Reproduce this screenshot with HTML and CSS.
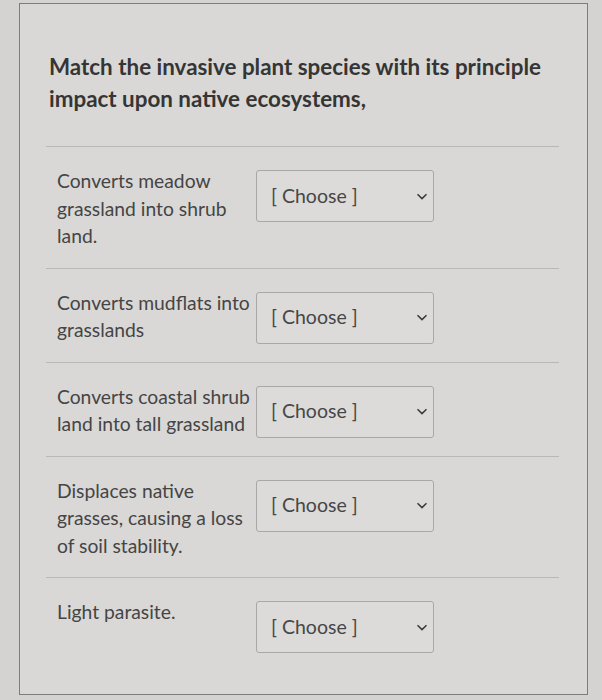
FILE: index.html
```html
<!DOCTYPE html>
<html lang="en">
<head>
<meta charset="utf-8">
<title>Matching question</title>
<link rel="stylesheet" href="styles.css">
</head>
<body>
<div class="card">
  <div class="question">Match the invasive plant species with its principle impact upon native ecosystems,</div>
  <div class="answers">
    <div class="row">
      <div class="prompt">Converts meadow grassland into shrub land.</div>
      <div class="select"><span class="value">[ Choose ]</span><svg class="chev" viewBox="0 0 12 7" width="12" height="7"><path d="M1.5 1.2 L6 5.6 L10.5 1.2" fill="none" stroke="#3a3a3a" stroke-width="1.5"/></svg></div>
    </div>
    <div class="row">
      <div class="prompt">Converts mudflats into grasslands</div>
      <div class="select"><span class="value">[ Choose ]</span><svg class="chev" viewBox="0 0 12 7" width="12" height="7"><path d="M1.5 1.2 L6 5.6 L10.5 1.2" fill="none" stroke="#3a3a3a" stroke-width="1.5"/></svg></div>
    </div>
    <div class="row">
      <div class="prompt">Converts coastal shrub land into tall grassland</div>
      <div class="select"><span class="value">[ Choose ]</span><svg class="chev" viewBox="0 0 12 7" width="12" height="7"><path d="M1.5 1.2 L6 5.6 L10.5 1.2" fill="none" stroke="#3a3a3a" stroke-width="1.5"/></svg></div>
    </div>
    <div class="row">
      <div class="prompt">Displaces native grasses, causing a loss of soil stability.</div>
      <div class="select"><span class="value">[ Choose ]</span><svg class="chev" viewBox="0 0 12 7" width="12" height="7"><path d="M1.5 1.2 L6 5.6 L10.5 1.2" fill="none" stroke="#3a3a3a" stroke-width="1.5"/></svg></div>
    </div>
    <div class="row last">
      <div class="prompt">Light parasite.</div>
      <div class="select"><span class="value">[ Choose ]</span><svg class="chev" viewBox="0 0 12 7" width="12" height="7"><path d="M1.5 1.2 L6 5.6 L10.5 1.2" fill="none" stroke="#3a3a3a" stroke-width="1.5"/></svg></div>
    </div>
  </div>
</div>
</body>
</html>
```
FILE: styles.css
```css
html, body {
  margin: 0;
  padding: 0;
}
body {
  background: #d4d3d1;
  font-family: Lato, "Open Sans", sans-serif;
  color: #454545;
  width: 602px;
  height: 700px;
  overflow: hidden;
}
.card {
  margin: 3px 0 0 19px;
  width: 569px;
  height: 692px;
  border: 1.5px solid #7d7d7d;
  background: #d9d8d6;
  box-sizing: border-box;
  padding: 0 28px 0 26px;
}
.question {
  font-weight: 700;
  font-size: 22.4px;
  line-height: 32px;
  color: #353535;
  padding: 47px 0 0 3px;
  height: 95px;
  border-bottom: 1px solid #b9b8b6;
  box-sizing: content-box;
}
.answers {
  display: flex;
  flex-direction: column;
}
.row {
  display: flex;
  align-items: flex-start;
  padding: 20px 0 18px 11px;
  border-bottom: 1px solid #b9b8b6;
}
.row.last {
  border-bottom: none;
}
.prompt {
  width: 198px;
  font-size: 19.3px;
  line-height: 27.5px;
  color: #454545;
}
.select {
  margin: 3px 0 0 1px;
  width: 178px;
  height: 52px;
  box-sizing: border-box;
  border: 1px solid #a9a8a6;
  border-radius: 3px;
  background: #dcdbd9;
  display: flex;
  align-items: center;
  justify-content: space-between;
  padding: 0 5px 0 14px;
}
.value {
  font-size: 19.5px;
  color: #474747;
  margin-top: -2px;
}
.chev {
  display: block;
}
```
